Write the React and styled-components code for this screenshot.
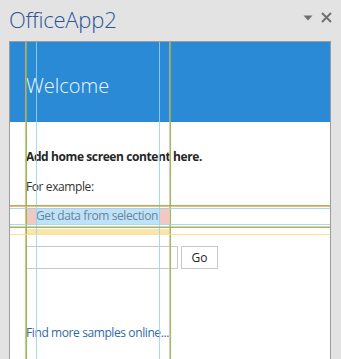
import React from "react";
import styled, { createGlobalStyle } from "styled-components";

const GlobalStyle = createGlobalStyle`
  html, body { margin: 0; padding: 0; background: #e3e3e3; }
  body { font-family: "Open Sans", "Noto Sans", sans-serif; overflow: hidden; }
  * { box-sizing: border-box; }
`;

const Page = styled.div`
  width: 341px;
  height: 359px;
  display: flex;
  flex-direction: column;
  background: #e3e3e3;
`;

const TitleBar = styled.div`
  height: 41px;
  display: flex;
  align-items: flex-start;
  justify-content: space-between;
  padding: 4px 9px 0 9px;
`;

const Title = styled.div`
  font-size: 22px;
  font-weight: 300;
  line-height: 30px;
  color: #2a5699;
  letter-spacing: -0.2px;
`;

const Controls = styled.div`
  display: flex;
  align-items: center;
  gap: 8px;
  padding-top: 8px;
`;

const Pane = styled.div`
  position: relative;
  flex: 1;
  margin: 0 10px 0 9px;
  border: 1px solid #9c9c9c;
  border-bottom: none;
  background: #ffffff;
  overflow: hidden;
`;

const Header = styled.div`
  height: 80px;
  background: #2b8ad6;
  padding: 30px 0 0 16px;
`;

const Welcome = styled.h1`
  margin: 0;
  font-size: 20px;
  font-weight: 300;
  line-height: 28px;
  color: #eef6fc;
  letter-spacing: 0;
`;

const Content = styled.div`
  padding: 0 0 0 16px;
  display: flex;
  flex-direction: column;
  align-items: flex-start;
  color: #333333;
  font-size: 12px;
  line-height: 16px;
  letter-spacing: -0.4px;
`;

const Heading = styled.p`
  margin: 27px 0 0;
  font-weight: 700;
  color: #262626;
`;

const Para = styled.p`
  margin: 14px 0 0;
`;

const ActionButton = styled.button`
  margin: 13px 0 0;
  height: 16px;
  padding: 0 10px;
  border: none;
  background: transparent;
  font: inherit;
  letter-spacing: inherit;
  color: #333333;
  line-height: 16px;
  width: 143px;
  text-align: left;
  white-space: nowrap;
`;

const Form = styled.div`
  margin-top: 22px;
  display: flex;
  gap: 3px;
`;

const Input = styled.input`
  width: 152px;
  height: 23px;
  border: 1px solid #c8c8c8;
  padding: 0 6px;
  font: inherit;
  outline: none;
`;

const GoButton = styled.button`
  width: 37px;
  height: 23px;
  border: 1px solid #c8c8c8;
  background: #ffffff;
  font: inherit;
  font-size: 12px;
  letter-spacing: 0;
  color: #222222;
  padding: 0;
`;

const MoreLink = styled.a`
  margin-top: 56px;
  color: #2f6aa6;
  text-decoration: none;
  white-space: nowrap;
`;

/* DevTools-style inspection overlay drawn over the pane */
const Overlay = styled.div`
  position: absolute;
  inset: 0;
  pointer-events: none;
`;

const VGuide = styled.div`
  position: absolute;
  top: 0;
  bottom: 0;
  width: 1px;
  background: ${(p) => p.$color};
`;

const HGuide = styled.div`
  position: absolute;
  left: 0;
  right: 0;
  height: 1px;
  background: ${(p) => p.$color};
`;

const Box = styled.div`
  position: absolute;
  background: ${(p) => p.$color};
`;

const ORANGE = "rgba(240, 160, 110, 0.8)";
const PINK = "rgba(240, 170, 150, 0.7)";
const GREEN = "rgba(130, 190, 60, 0.9)";
const BLUE = "rgba(150, 210, 240, 0.85)";
const YELLOW = "rgba(250, 215, 120, 0.8)";

const vGuides = [
  { x: 15, c: ORANGE },
  { x: 16, c: GREEN },
  { x: 26, c: BLUE },
  { x: 149, c: BLUE },
  { x: 159, c: PINK },
  { x: 160, c: GREEN },
];

const hGuides = [
  { y: 163, c: GREEN },
  { y: 164, c: ORANGE },
  { y: 166, c: BLUE },
  { y: 182, c: BLUE },
  { y: 184, c: PINK },
  { y: 185, c: GREEN },
  { y: 192, c: YELLOW },
];

const boxes = [
  { l: 16, t: 166, w: 10, h: 16, c: "rgba(232, 165, 155, 0.6)" },
  { l: 149, t: 166, w: 10, h: 16, c: "rgba(232, 165, 155, 0.6)" },
  { l: 26, t: 166, w: 123, h: 16, c: "rgba(140, 200, 240, 0.55)" },
  { l: 16, t: 187, w: 144, h: 5, c: "rgba(252, 220, 140, 0.75)" },
];

function Caret() {
  return (
    <svg width="10" height="6" viewBox="0 0 10 6">
      <path d="M0.5 0.5 L9.5 0.5 L5 5.5 Z" fill="#707070" />
    </svg>
  );
}

function Close() {
  return (
    <svg width="11" height="11" viewBox="0 0 11 11">
      <path d="M1 1 L10 10 M10 1 L1 10" stroke="#707070" strokeWidth="2" />
    </svg>
  );
}

export default function App() {
  return (
    <>
      <GlobalStyle />
      <Page>
        <TitleBar>
          <Title>OfficeApp2</Title>
          <Controls>
            <Caret />
            <Close />
          </Controls>
        </TitleBar>
        <Pane>
          <Header>
            <Welcome>Welcome</Welcome>
          </Header>
          <Content>
            <Heading>Add home screen content here.</Heading>
            <Para>For example:</Para>
            <ActionButton>Get data from selection</ActionButton>
            <Form>
              <Input type="text" />
              <GoButton>Go</GoButton>
            </Form>
            <MoreLink href="#">Find more samples online...</MoreLink>
          </Content>
          <Overlay>
            {boxes.map((b, i) => (
              <Box
                key={i}
                $color={b.c}
                style={{ left: b.l, top: b.t, width: b.w, height: b.h }}
              />
            ))}
            {vGuides.map((g, i) => (
              <VGuide key={"v" + i} $color={g.c} style={{ left: g.x }} />
            ))}
            {hGuides.map((g, i) => (
              <HGuide key={"h" + i} $color={g.c} style={{ top: g.y }} />
            ))}
          </Overlay>
        </Pane>
      </Page>
    </>
  );
}
